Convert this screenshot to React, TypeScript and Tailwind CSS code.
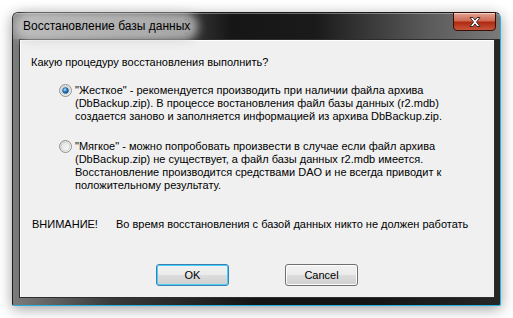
import React from "react";

function Radio({ checked }: { checked?: boolean }) {
  return (
    <svg width="13" height="13" viewBox="0 0 13 13" className="shrink-0">
      <defs>
        <linearGradient id={checked ? "rbg1" : "rbg0"} x1="0" y1="0" x2="1" y2="1">
          <stop offset="0" stopColor="#dcdcdc" />
          <stop offset="1" stopColor="#ffffff" />
        </linearGradient>
        <radialGradient id="rdot" cx="0.4" cy="0.35" r="0.7">
          <stop offset="0" stopColor="#c4ecfd" />
          <stop offset="0.45" stopColor="#2a87d0" />
          <stop offset="1" stopColor="#0b3b7a" />
        </radialGradient>
      </defs>
      <circle cx="6.5" cy="6.5" r="6" fill={`url(#${checked ? "rbg1" : "rbg0"})`} stroke="#8c8e90" strokeWidth="1" />
      <circle cx="6.5" cy="6.5" r="4.3" fill="none" stroke="#c8c9ca" strokeWidth="0.8" />
      {checked && <circle cx="6.5" cy="6.5" r="3" fill="url(#rdot)" stroke="#1d4e7e" strokeWidth="0.5" />}
    </svg>
  );
}

function Button({ label, primary }: { label: string; primary?: boolean }) {
  return (
    <button
      className={`w-[73px] h-[22px] rounded-[3px] border text-[11px] leading-[13px] text-black bg-[linear-gradient(to_bottom,#f2f2f2_0%,#ebebeb_48%,#dddddd_50%,#cfcfcf_100%)] ${
        primary
          ? "border-[#3c7fb1] shadow-[inset_0_0_0_1px_#48d0f8]"
          : "border-[#707070] shadow-[inset_0_0_0_1px_#fcfcfc]"
      }`}
    >
      {label}
    </button>
  );
}

export default function App() {
  return (
    <div className="w-[513px] h-[318px] bg-white pt-[12px] pl-[12px] font-['Liberation_Sans',Arial,sans-serif]">
      <div className="w-[489px] h-[294px] flex flex-col rounded-t-[6px] rounded-b-[2px] border border-[#1b1b1b] border-r-[#22b2e4] border-b-[#22b2e4] bg-[linear-gradient(to_right,#7c7c7c_0%,#3a3a3a_20%,#141414_50%,#151515_75%,#262626_100%)] shadow-[0_3px_14px_rgba(0,0,0,0.38)]">
        {/* title bar */}
        <div className="relative h-[26px] flex items-center rounded-t-[5px] bg-[linear-gradient(to_right,#8c8c8c_0%,#555555_28%,#161616_45%,#1a1a1a_62%,#5a5a5a_85%,#7a7a7a_100%)] shadow-[inset_0_1px_0_rgba(255,255,255,0.35)]">
          <span className="ml-[9px] px-[1px] text-[12px] leading-[15px] text-black font-['Liberation_Sans',Arial,sans-serif] bg-[rgba(210,210,210,0.7)] rounded-[10px] shadow-[0_0_10px_7px_rgba(210,210,210,0.75)]">
            Восстановление базы данных
          </span>
          <div className="absolute right-[4px] top-[-1px] w-[43px] h-[19px] rounded-b-[4px] border border-[#3a0e08] bg-[linear-gradient(to_bottom,#e3a493_0%,#cf6b55_45%,#b02a12_55%,#c8563c_100%)] shadow-[inset_0_1px_0_rgba(255,255,255,0.5)] flex items-center justify-center">
            <svg width="16" height="12" viewBox="0 0 16 12">
              <path d="M3 1.5h3l2 2.6 2-2.6h3l-3.5 4.5 3.5 4.5h-3l-2-2.6-2 2.6h-3l3.5-4.5z" fill="#ffffff" stroke="#3b2a28" strokeWidth="1" strokeLinejoin="round" />
            </svg>
          </div>
        </div>

        {/* client area */}
        <div className="flex-1 ml-[6px] mr-[5px] mb-[7px] bg-[#f0f0f0] border border-[#2e2e2e] shadow-[inset_1px_1px_0_#ffffff] text-[11px] leading-[13px] text-black flex flex-col">
          <div className="pl-[11px] pt-[16px]">Какую процедуру восстановления выполнить?</div>

          <div className="flex items-start pl-[39px] mt-[15px]">
            <Radio checked />
            <div className="ml-[3px] w-[400px]">
              <div>"Жесткое" - рекомендуется производить при наличии файла архива</div>
              <div>(DbBackup.zip). В процессе востановления файл базы данных (r2.mdb)</div>
              <div>создается заново и заполняется информацией из архива DbBackup.zip.</div>
            </div>
          </div>

          <div className="flex items-start pl-[39px] mt-[17px]">
            <Radio />
            <div className="ml-[3px] w-[400px]">
              <div>"Мягкое" - можно попробовать произвести в случае если файл архива</div>
              <div>(DbBackup.zip) не существует, а файл базы данных r2.mdb имеется.</div>
              <div>Восстановление производится средствами DAO и не всегда приводит к</div>
              <div>положительному результату.</div>
            </div>
          </div>

          <div className="flex pl-[12px] mt-[26px]">
            <div className="w-[84px]">ВНИМАНИЕ!</div>
            <div>Во время восстановления с базой данных никто не должен работать</div>
          </div>

          <div className="flex justify-center gap-[56px] mt-[33px]">
            <Button label="OK" primary />
            <Button label="Cancel" />
          </div>
        </div>
      </div>
    </div>
  );
}
